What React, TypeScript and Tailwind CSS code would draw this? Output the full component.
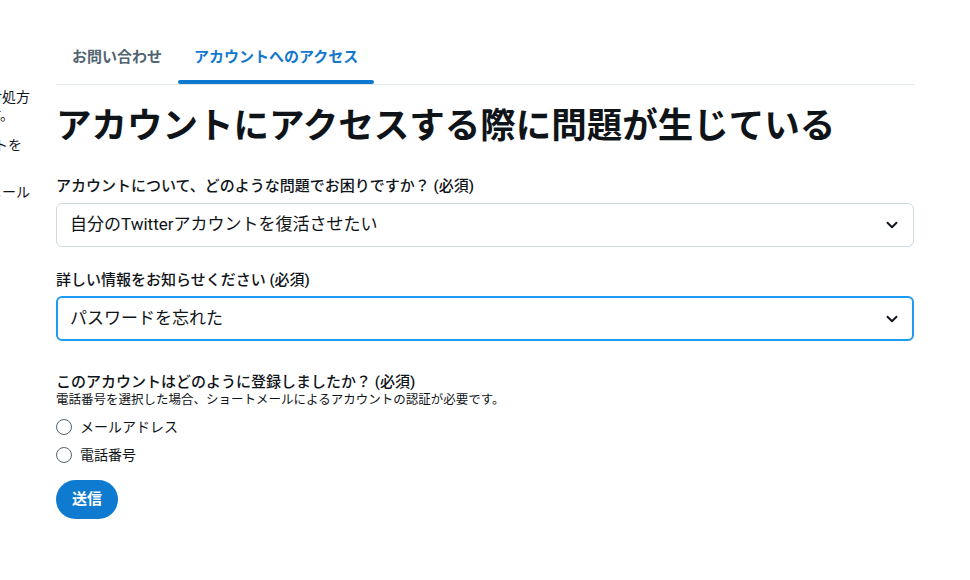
import React, { useState } from 'react';
import { ChevronDown } from 'lucide-react';

const font = { fontFamily: 'Roboto, "Noto Sans CJK JP", sans-serif' };

const SideLine: React.FC<{ text: string; pr: string; className?: string }> = ({ text, pr, className }) => (
  <div className={`flex justify-end whitespace-nowrap ${pr} ${className ?? ''}`}>{text}</div>
);

export default function App() {
  const [tab, setTab] = useState(1);
  const [method, setMethod] = useState<string | null>(null);

  return (
    <div className="w-[970px] h-[580px] bg-white text-[#0f1419] flex overflow-hidden" style={font}>
      {/* clipped sidebar */}
      <div className="w-[56px] shrink-0 overflow-hidden pt-[88px] text-[14px] leading-[18px] text-[#0f1419]">
        <SideLine text="対処方" pr="pr-[26px]" />
        <SideLine text="す。" pr="pr-[42px]" />
        <SideLine text="トを" pr="pr-[34px]" className="mt-[12px]" />
        <SideLine text="メール" pr="pr-[26px]" className="mt-[29px]" />
      </div>

      <div className="w-[858px] shrink-0 flex flex-col">
        {/* tabs */}
        <div className="flex mt-[30px] border-b border-[#e1e8ed]">
          {['お問い合わせ', 'アカウントへのアクセス'].map((t, i) => (
            <button
              key={t}
              onClick={() => setTab(i)}
              className={`relative h-[54px] px-4 text-[15px] font-bold ${tab === i ? 'text-[#1478cc]' : 'text-[#536471]'}`}
            >
              {t}
              {tab === i && <span className="absolute left-0 right-0 bottom-0 h-[4px] rounded-full bg-[#0f78cf]" />}
            </button>
          ))}
        </div>

        <h1 className="mt-[19px] text-[35.5px] leading-[44px] font-bold">
          アカウントにアクセスする際に問題が生じている
        </h1>

        <label className="mt-[28px] text-[15px] leading-[20px] font-medium">
          アカウントについて、どのような問題でお困りですか？ (必須)
        </label>
        <div className="mt-[7px] h-[44px] rounded-[6px] border border-[#cfd9de] flex items-center justify-between pl-[13px] pr-[12px]">
          <span className="text-[17px]">自分のTwitterアカウントを復活させたい</span>
          <ChevronDown size={18} strokeWidth={2.5} />
        </div>

        <label className="mt-[23px] text-[15px] leading-[20px] font-medium">
          詳しい情報をお知らせください (必須)
        </label>
        <div className="mt-[6px] h-[45px] rounded-[6px] border-2 border-[#1d9bf0] flex items-center justify-between pl-[12px] pr-[11px]">
          <span className="text-[17px]">パスワードを忘れた</span>
          <ChevronDown size={18} strokeWidth={2.5} />
        </div>

        <label className="mt-[31px] text-[15px] leading-[20px] font-medium">
          このアカウントはどのように登録しましたか？ (必須)
        </label>
        <p className="text-[12.5px] leading-[16px] text-[#0f1419]">
          電話番号を選択した場合、ショートメールによるアカウントの認証が必要です。
        </p>

        <div className="mt-[9px] flex flex-col gap-[8px]">
          {['メールアドレス', '電話番号'].map((m) => (
            <label key={m} className="flex items-center gap-[8px] h-[20px] text-[14px] cursor-pointer" onClick={() => setMethod(m)}>
              <span className="w-[16px] h-[16px] rounded-full border-[1.5px] border-[#536471] flex items-center justify-center">
                {method === m && <span className="w-[8px] h-[8px] rounded-full bg-[#0f78cf]" />}
              </span>
              {m}
            </label>
          ))}
        </div>

        <div className="mt-[15px]">
          <button className="h-[39px] px-[16px] rounded-full bg-[#0f7bd0] text-white text-[15px] font-bold">
            送信
          </button>
        </div>
      </div>
    </div>
  );
}
